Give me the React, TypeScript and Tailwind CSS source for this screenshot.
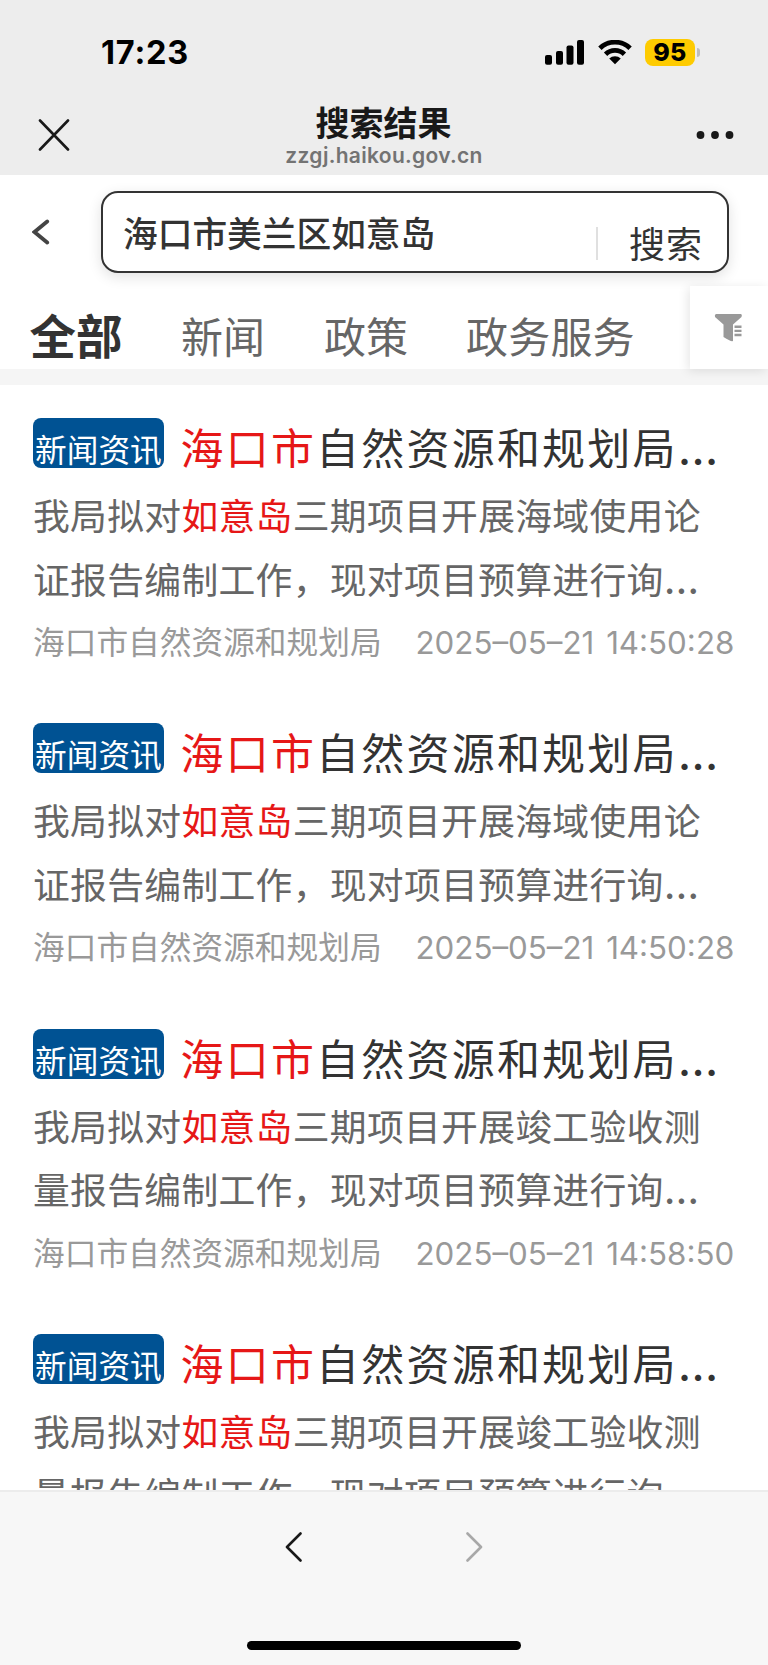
const results = [
  { line1: "三期项目开展海域使用论", line2: "证报告编制工作，现对项目预算进行询", time: "2025–05–21 14:50:28" },
  { line1: "三期项目开展海域使用论", line2: "证报告编制工作，现对项目预算进行询", time: "2025–05–21 14:50:28" },
  { line1: "三期项目开展竣工验收测", line2: "量报告编制工作，现对项目预算进行询", time: "2025–05–21 14:58:50" },
  { line1: "三期项目开展竣工验收测", line2: "量报告编制工作，现对项目预算进行询", time: "2025–05–21 14:58:50" },
];

function StatusBar() {
  return (
    <div className="flex h-[105px] items-center pl-[101px] pr-[68px]">
      <span className="pt-[2px] text-[32.5px] leading-none font-bold tracking-[0.8px] text-black">17:23</span>
      <div className="ml-auto flex items-center">
        <svg className="h-[26px] w-[40px]" viewBox="0 0 40 26">
          <rect x="0" y="15" width="7" height="9.8" rx="2" />
          <rect x="11" y="11" width="7" height="13.8" rx="2" />
          <rect x="21.5" y="5.5" width="7" height="19.3" rx="2" />
          <rect x="32" y="0" width="7" height="24.8" rx="2" />
        </svg>
        <svg className="ml-[12px] h-[25px] w-[36px]" viewBox="0 0 36 26">
          <g fill="none" stroke="#000" strokeWidth="5">
            <path d="M2.3 8.6 A22.5 22.5 0 0 1 33.7 8.6" />
            <path d="M8.2 14.8 A14 14 0 0 1 27.8 14.8" />
          </g>
          <path d="M12 19.2 A9 9 0 0 1 24 19.2 L18 25.2 Z" />
        </svg>
        <div className="ml-[12px] flex h-[27px] w-[50px] items-center justify-center rounded-[8px] bg-[#fecb00] text-[25px] leading-none font-extrabold tracking-[0.3px] text-black">
          95
        </div>
        <div className="ml-[2px] h-[9px] w-[3px] rounded-r-full bg-[#bdbdbd]" />
      </div>
    </div>
  );
}

function NavBar() {
  return (
    <div className="flex h-[70px] items-start justify-between pr-[34px] pl-[38px]">
      <svg className="mt-[14px] h-[32px] w-[32px]" viewBox="0 0 32 32" fill="none" stroke="#191919" strokeWidth="2.6" strokeLinecap="round">
        <path d="M2 1.5 L30 30.5 M30 1.5 L2 30.5" />
      </svg>
      <div className="flex w-[220px] flex-col items-center whitespace-nowrap">
        <div className="h-[38px] pl-[1px] text-[34px] leading-[38px] font-bold text-[#191919]">搜索结果</div>
        <div className="pl-[2px] text-[21px] leading-[26px] font-semibold tracking-[0.3px] text-[#737373]">zzgj.haikou.gov.cn</div>
      </div>
      <svg className="mt-[26px] h-[8px] w-[38px]" viewBox="0 0 38 8" fill="#191919">
        <circle cx="4.5" cy="4" r="3.9" />
        <circle cx="19" cy="4" r="3.9" />
        <circle cx="33.5" cy="4" r="3.9" />
      </svg>
    </div>
  );
}

function SearchBar() {
  return (
    <div className="flex h-[111px] pt-[16px] pl-[32px]">
      <svg className="mt-[28px] h-[26px] w-[18px]" viewBox="0 0 18 26" fill="none" stroke="#444" strokeWidth="3.8" strokeLinecap="round">
        <path d="M15.2 2.5 L2.5 13 L15.2 23.5" />
      </svg>
      <div className="ml-[51px] flex h-[82px] w-[628px] rounded-[17px] border-2 border-[#333] bg-white pl-[20px] whitespace-nowrap text-[#333] shadow-[0_4px_14px_rgba(0,0,0,0.12)]">
        <span className="w-[473px] text-[34.7px] leading-[82px] font-medium">海口市美兰区如意岛</span>
        <span className="mt-[34px] h-[33px] w-[2px] bg-[#e0e0e0]" />
        <span className="ml-[31px] pt-[12px] text-[36px] leading-[80px] tracking-[1px]">搜索</span>
      </div>
    </div>
  );
}

function Tabs() {
  return (
    <div className="flex h-[83px] whitespace-nowrap text-[42px] leading-[103px] text-[#666]">
      <span className="ml-[29.5px] w-[151.5px] text-[46.5px] font-bold text-[#333]">全部</span>
      <span className="w-[143px]">新闻</span>
      <span className="w-[142px]">政策</span>
      <span className="w-[224px] tracking-[0.2px]">政务服务</span>
      <div className="z-10 h-[83px] w-[78px] bg-white pt-[27px] pl-[24px] shadow-[-2px_2px_10px_rgba(0,0,0,0.1)]">
        <svg className="h-[29px] w-[29px]" viewBox="0 0 29 29" fill="#999">
          <path d="M2 1 H27 Q28.5 1.5 27.5 4 L19 11.5 V28 Q17 29 9.5 24 V11.5 L1 4 Q0.3 1.5 2 1 Z" />
          <path d="M20.5 12.5 H27.5 V15 H20.5 Z M20.5 16.8 H27.5 V19 H20.5 Z M20.5 20.8 H27.5 V23.2 H20.5 Z" />
        </svg>
      </div>
    </div>
  );
}

function ResultItem({ item }: { item: (typeof results)[number] }) {
  return (
    <div className="mb-[50.3px] h-[255px] shrink-0 whitespace-nowrap">
      <div className="flex h-[50px] overflow-hidden">
        <span className="h-[50px] w-[131px] rounded-[8px] bg-[#005293] pl-[2px] text-[31.7px] leading-[66px] text-white">新闻资讯</span>
        <span className="ml-[16.5px] text-[43px] leading-[63px] tracking-[2.2px] text-[#333]">
          <span className="text-[#e61717]">海口市</span>自然资源和规划局
          <span className="font-[Inter] text-[47px] leading-none">…</span>
        </span>
      </div>
      <div className="mt-[17px] text-[36.8px] leading-[63.5px] tracking-[0.3px] text-[#666]">
        <p>
          我局拟对<span className="text-[#e61717]">如意岛</span>{item.line1}
        </p>
        <p>
          {item.line2}<span className="font-[Inter] text-[41px] leading-none">…</span>
        </p>
      </div>
      <div className="flex text-[31.7px] leading-[62px] text-[#999]">
        <span className="w-[382.5px]">海口市自然资源和规划局</span>
        <span className="text-[31.3px] [word-spacing:3px]">{item.time}</span>
      </div>
    </div>
  );
}

function BottomBar() {
  return (
    <div className="flex h-[175px] shrink-0 flex-col items-center border-t-2 border-[#ececec] bg-[#f7f7f7]">
      <div className="flex w-full items-center pt-[40px] pl-[285px]">
        <svg className="h-[32px] w-[18px]" viewBox="0 0 18 32" fill="none" stroke="#191919" strokeWidth="2.6" strokeLinecap="round" strokeLinejoin="round">
          <path d="M15.5 1.5 L2 15 L15.5 28.5" />
        </svg>
        <svg className="ml-[162px] h-[32px] w-[18px]" viewBox="0 0 18 32" fill="none" stroke="#a8a8a8" strokeWidth="2.6" strokeLinecap="round" strokeLinejoin="round">
          <path d="M2.5 1.5 L16 15 L2.5 28.5" />
        </svg>
      </div>
      <div className="mt-[77px] h-[9px] w-[274px] rounded-full bg-black" />
    </div>
  );
}

export default function App() {
  return (
    <div className="flex h-[1665px] w-[768px] flex-col overflow-hidden bg-white font-['Inter','Noto_Sans_CJK_SC',sans-serif]">
      <header className="h-[175px] shrink-0 bg-[#ededed]">
        <StatusBar />
        <NavBar />
      </header>
      <div className="shrink-0">
        <SearchBar />
        <Tabs />
        <div className="h-[16px] bg-[#f5f5f5]" />
      </div>
      <main className="flex h-[1105px] shrink-0 flex-col overflow-hidden pt-[33px] pl-[33px]">
        {results.map((item, i) => (
          <ResultItem key={i} item={item} />
        ))}
      </main>
      <BottomBar />
    </div>
  );
}
